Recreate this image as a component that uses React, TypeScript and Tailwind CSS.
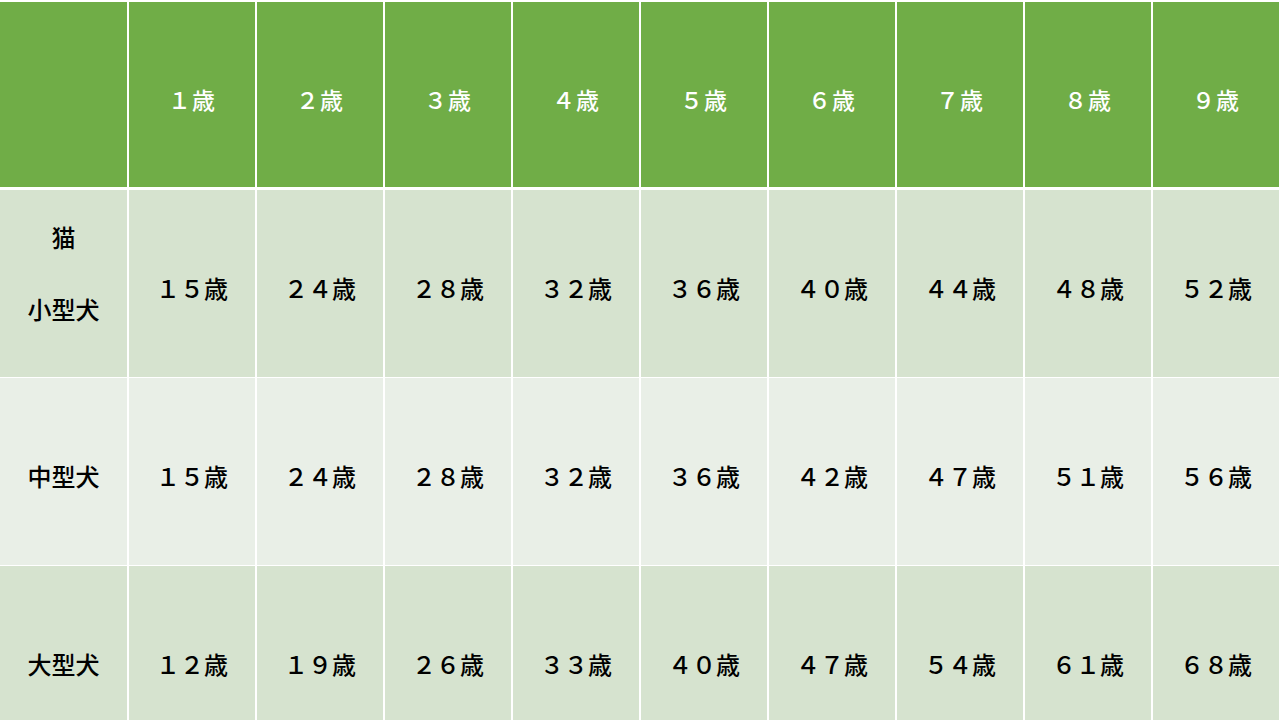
const headers = ["１歳", "２歳", "３歳", "４歳", "５歳", "６歳", "７歳", "８歳", "９歳"];

const rows = [
  {
    label: ["猫", "小型犬"],
    values: ["１５歳", "２４歳", "２８歳", "３２歳", "３６歳", "４０歳", "４４歳", "４８歳", "５２歳"],
    bg: "bg-[#d6e3cf]",
  },
  {
    label: ["中型犬"],
    values: ["１５歳", "２４歳", "２８歳", "３２歳", "３６歳", "４２歳", "４７歳", "５１歳", "５６歳"],
    bg: "bg-[#e9efe7]",
  },
  {
    label: ["大型犬"],
    values: ["１２歳", "１９歳", "２６歳", "３３歳", "４０歳", "４７歳", "５４歳", "６１歳", "６８歳"],
    bg: "bg-[#d6e3cf]",
  },
];

export default function App() {
  return (
    <div
      className="w-[1280px] h-[720px] overflow-hidden bg-white pt-[2px]"
      style={{ fontFamily: '"Noto Sans CJK JP", "Noto Sans", sans-serif' }}
    >
      {/* header row */}
      <div className="grid grid-cols-[127px_repeat(9,126px)] gap-x-[2px] h-[185px]">
        <div className="bg-[#70ad47]" />
        {headers.map((h) => (
          <div
            key={h}
            className="bg-[#70ad47] flex items-center justify-center pt-[10px] text-white text-[23px] tracking-[1px] font-medium"
          >
            {h}
          </div>
        ))}
      </div>

      <div className="flex flex-col gap-y-[1px] mt-[3px]">
        {rows.map((row, i) => (
          <div key={i} className="grid grid-cols-[127px_repeat(9,126px)] gap-x-[2px] h-[187px] shrink-0">
            <div
              className={`${row.bg} flex flex-col items-center justify-center gap-[48px] text-[24px] text-black font-medium ${
                row.label.length > 1 ? "pb-[22px]" : "pt-[8px]"
              }`}
            >
              {row.label.map((l) => (
                <span key={l} className="leading-none">
                  {l}
                </span>
              ))}
            </div>
            {row.values.map((v, j) => (
              <div
                key={j}
                className={`${row.bg} flex items-center justify-center pt-[8px] text-[24px] text-black font-medium`}
              >
                {v}
              </div>
            ))}
          </div>
        ))}
      </div>
    </div>
  );
}
